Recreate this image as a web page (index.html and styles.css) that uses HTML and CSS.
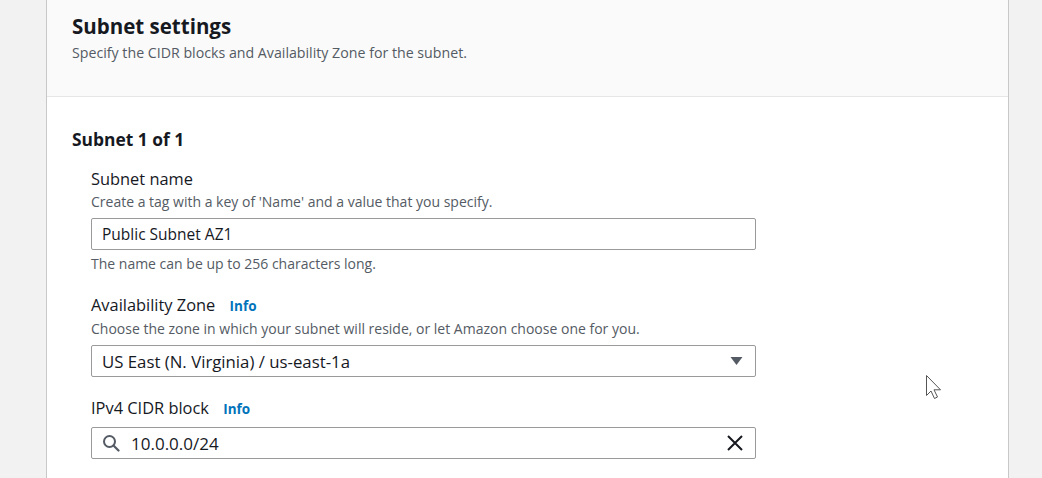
FILE: index.html
```html
<!DOCTYPE html>
<html>
<head>
<meta charset="utf-8">
<link rel="stylesheet" href="styles.css">
</head>
<body>
<div class="page">
  <div class="card">
    <div class="card-header">
      <h2 class="title">Subnet settings</h2>
      <p class="subtitle">Specify the CIDR blocks and Availability Zone for the subnet.</p>
    </div>
    <div class="card-body">
      <h3 class="section">Subnet 1 of 1</h3>
      <div class="fields">
        <div class="field">
          <div class="label">Subnet name</div>
          <div class="desc">Create a tag with a key of 'Name' and a value that you specify.</div>
          <div class="input"><span class="value">Public Subnet AZ1</span></div>
          <div class="hint">The name can be up to 256 characters long.</div>
        </div>
        <div class="field">
          <div class="label">Availability Zone <span class="info">Info</span></div>
          <div class="desc">Choose the zone in which your subnet will reside, or let Amazon choose one for you.</div>
          <div class="input select">
            <span class="value">US East (N. Virginia) / us-east-1a</span>
            <svg class="caret" width="13" height="10" viewBox="0 0 13 10"><path d="M0.5 1h12L6.5 9z" fill="#545b64"/></svg>
          </div>
        </div>
        <div class="field">
          <div class="label">IPv4 CIDR block <span class="info">Info</span></div>
          <div class="input search">
            <svg class="search-icon" width="18" height="18" viewBox="0 0 18 18"><circle cx="7.5" cy="7.5" r="5.5" fill="none" stroke="#545b64" stroke-width="2"/><path d="M11.5 11.5l5 5" stroke="#545b64" stroke-width="2.2" stroke-linecap="round"/></svg>
            <span class="value">10.0.0.0/24</span>
            <svg class="clear" width="18" height="18" viewBox="0 0 18 18"><path d="M2 2l14 14M16 2L2 16" stroke="#16191f" stroke-width="2"/></svg>
          </div>
        </div>
      </div>
    </div>
  </div>
</div>
<svg class="cursor" width="20" height="28" viewBox="0 0 20 28"><path d="M1.5 1.5v20l4.5-4.5 3.5 7.5 3-1.5-3.5-7.2h6.5z" fill="#fff" stroke="#555" stroke-width="1"/></svg>
</body>
</html>
```
FILE: styles.css
```css
html, body {
  margin: 0;
  padding: 0;
}
body {
  background: #f2f2f2;
  font-family: "Open Sans", "Noto Sans", Arial, sans-serif;
  color: #16191f;
  height: 478px;
  overflow: hidden;
}
.page {
  display: flex;
  padding-left: 46px;
}
.card {
  width: 961px;
  border-left: 1px solid #c8c8c8;
  border-right: 1px solid #c8c8c8;
  background: #fff;
  min-height: 478px;
}
.card-header {
  background: #fafafa;
  border-bottom: 1px solid #e6e6e6;
  height: 97px;
  box-sizing: border-box;
  padding: 12px 25px 0 25px;
}
.title {
  margin: 0;
  font-size: 20.5px;
  font-weight: 700;
  line-height: 28px;
}
.subtitle {
  margin: 3px 0 0 0;
  font-size: 14.2px;
  line-height: 20px;
  color: #545b64;
}
.card-body {
  padding: 30px 25px 0 25px;
}
.section {
  margin: 0;
  font-size: 17.4px;
  font-weight: 700;
  line-height: 24px;
}
.fields {
  padding-left: 19px;
  padding-top: 17px;
  display: flex;
  flex-direction: column;
  gap: 20px;
  width: 665px;
}
.label {
  font-size: 16.4px;
  line-height: 22px;
  margin-bottom: 2px;
}
.info {
  color: #0073bb;
  font-weight: 700;
  font-size: 13.5px;
  margin-left: 10px;
}
.desc, .hint {
  font-size: 14px;
  line-height: 20px;
  color: #545b64;
}
.hint {
  margin-top: 4px;
}
.input {
  margin-top: 6px;
  height: 32px;
  box-sizing: border-box;
  border: 1px solid #9a9a9a;
  border-radius: 2px;
  display: flex;
  align-items: center;
  padding: 0 11px 0 10px;
  font-size: 15.5px;
}
.label + .input {
  margin-top: 7px;
}
.select .value {
  font-size: 16.8px;
}
.search .value {
  font-size: 17px;
}
.value {
  flex: 1;
}
.caret {
  margin-right: 1px;
}
.search-icon {
  margin-right: 11px;
}
.cursor {
  position: absolute;
  left: 925px;
  top: 374px;
}
```
